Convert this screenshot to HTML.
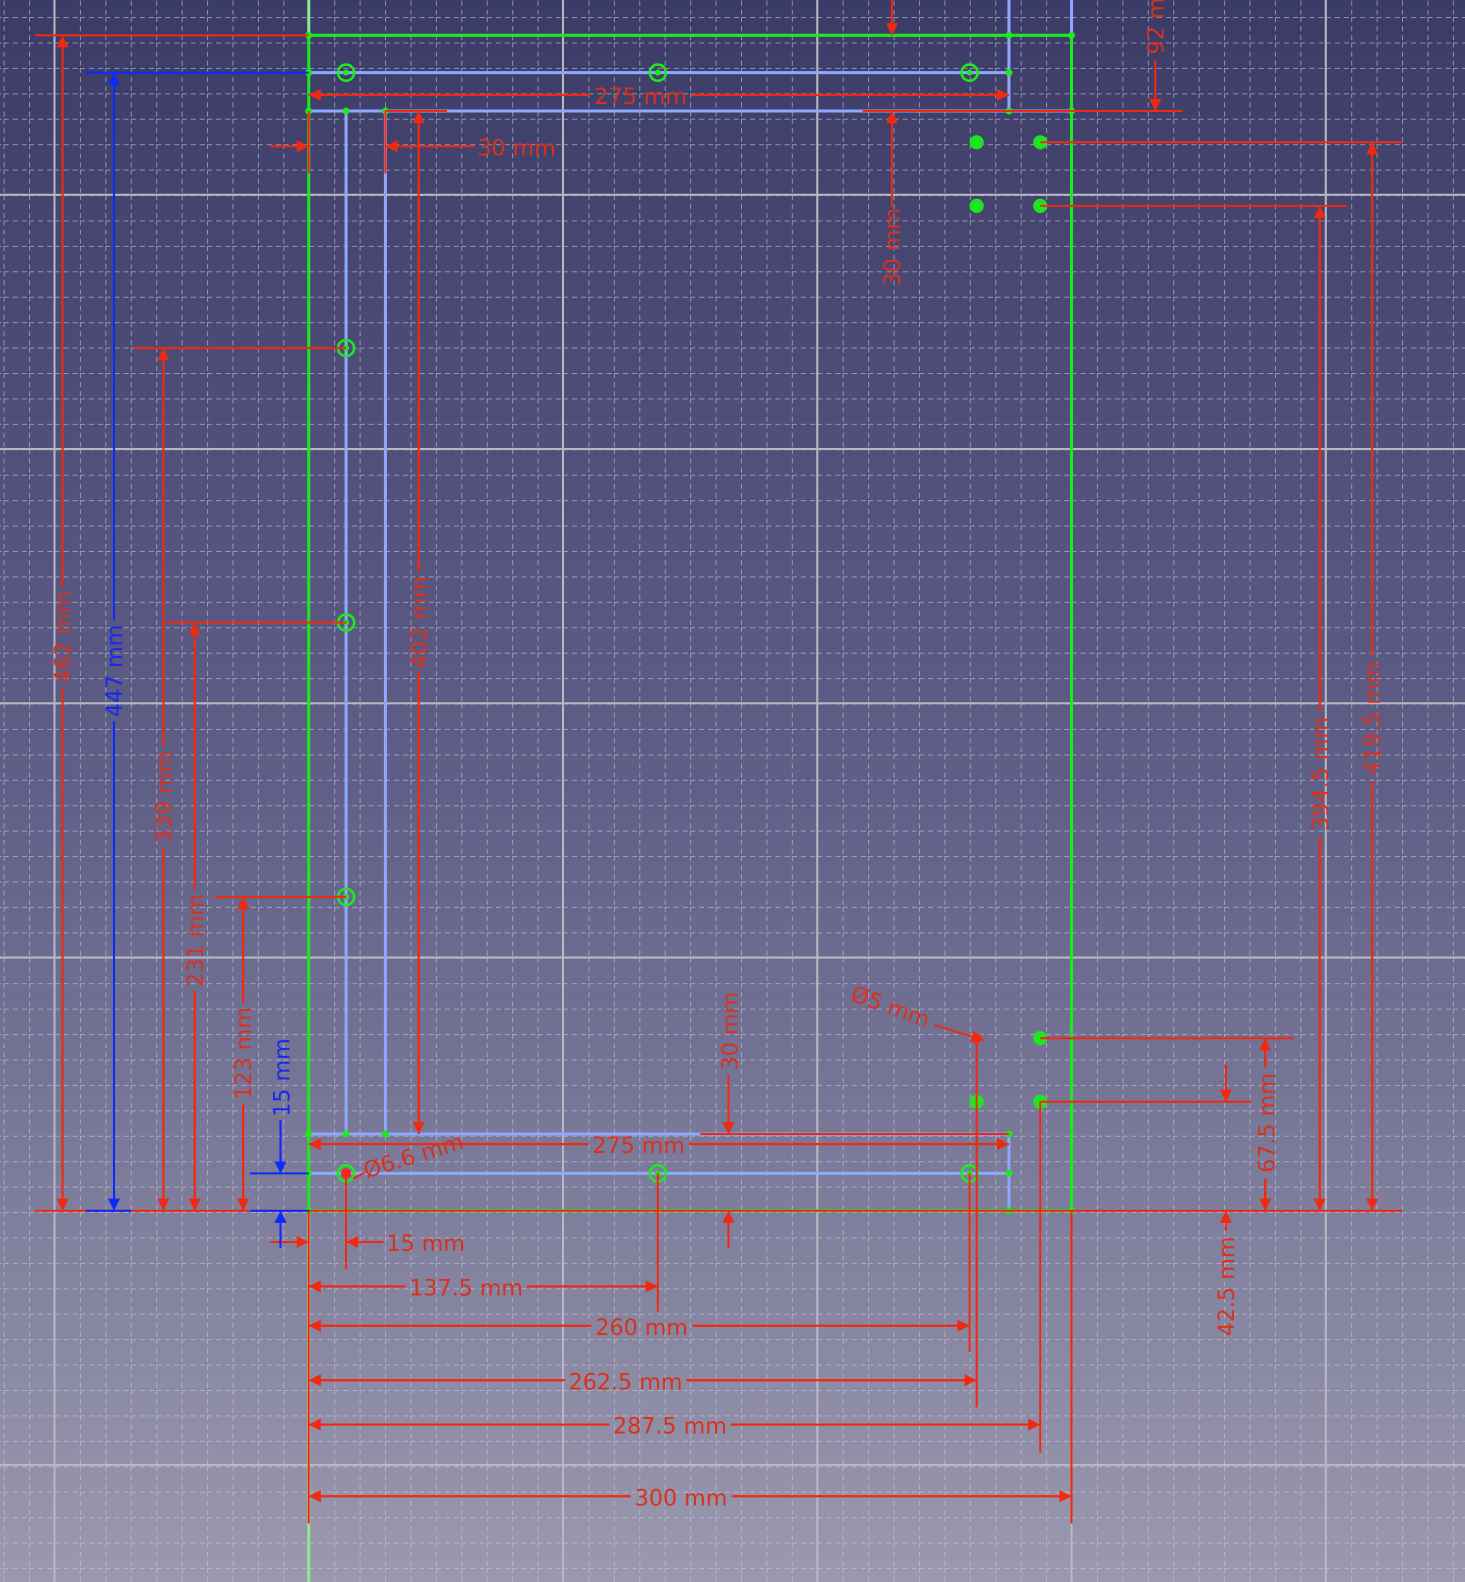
<!DOCTYPE html>
<html><head><meta charset="utf-8">
<style>
html,body{margin:0;padding:0;width:1465px;height:1582px;overflow:hidden;background:#5a5a80}
svg{display:block}
text{font-family:"DejaVu Sans","Liberation Sans",sans-serif;font-size:22px;fill:#d8321c}
</style></head><body>
<svg width="1465" height="1582" viewBox="0 0 1452 1568" preserveAspectRatio="none" xmlns="http://www.w3.org/2000/svg">
<defs>
<linearGradient id="bg" x1="0" y1="0" x2="0" y2="1">
<stop offset="0" stop-color="#3b3b67"/><stop offset="0.5" stop-color="#5f5f88"/><stop offset="1" stop-color="#9b99ae"/>
</linearGradient>
<pattern id="minor" x="3.6" y="16.9" width="25.2" height="25.2" patternUnits="userSpaceOnUse">
<path d="M0.5 0V25.2M0 0.5H25.2" stroke="#c8c8d8" stroke-width="1" stroke-dasharray="5 4" fill="none" opacity="0.6"/>
</pattern>
<marker id="a" viewBox="0 0 10 10" refX="10" refY="5" markerWidth="12" markerHeight="12" markerUnits="userSpaceOnUse" orient="auto">
<path d="M0 0L10 5L0 10z" fill="#f02a10"/></marker>
<marker id="b" viewBox="0 0 10 10" refX="10" refY="5" markerWidth="12" markerHeight="12" markerUnits="userSpaceOnUse" orient="auto">
<path d="M0 0L10 5L0 10z" fill="#0a2aff"/></marker>
<mask id="gap" maskUnits="userSpaceOnUse" x="0" y="0" width="1452" height="1568">
<rect width="1452" height="1568" fill="#fff"/>
<g fill="#000">
<rect x="585" y="82" width="100" height="26"/>
<rect x="472" y="133" width="80" height="26"/>
<rect x="583" y="1122" width="100" height="26"/>
<rect x="382" y="1219" width="80" height="26"/>
<rect x="402" y="1263" width="120" height="26"/>
<rect x="586" y="1302" width="100" height="26"/>
<rect x="560" y="1356" width="120" height="26"/>
<rect x="604" y="1400" width="120" height="26"/>
<rect x="625" y="1471" width="100" height="26"/>
<rect x="50" y="582" width="24" height="100"/>
<rect x="101" y="615" width="24" height="100"/>
<rect x="150" y="740" width="24" height="100"/>
<rect x="181" y="882" width="24" height="100"/>
<rect x="229" y="994" width="24" height="100"/>
<rect x="266" y="1028" width="24" height="80"/>
<rect x="403" y="567" width="24" height="100"/>
<rect x="872" y="205" width="24" height="80"/>
<rect x="1133" y="-30" width="24" height="90"/>
<rect x="1296" y="705" width="24" height="124"/>
<rect x="1348" y="650" width="24" height="124"/>
<rect x="1242" y="1058" width="24" height="110"/>
<rect x="1203" y="1220" width="24" height="110"/>
<rect x="710" y="982" width="24" height="80"/>
</g>
</mask>
</defs>
<rect width="1452" height="1568" fill="url(#bg)"/>
<rect width="1452" height="1568" fill="url(#minor)"/>
<g stroke="#b8b8c4" stroke-width="2">
<path d="M54 0V1568M306 0V1568M558 0V1568M810 0V1568M1062 0V1568M1314 0V1568"/>
<path d="M0 193H1452M0 445H1452M0 697H1452M0 949H1452M0 1452H1452"/>
</g>
<g stroke="#8ea8ff" stroke-width="3" fill="none">
<path d="M306 72H1000M306 110H1062M1000 0V110M1062 0V35"/>
<path d="M343 110V1124M382 110V1124M306 1124H1000M306 1163H1000M1000 1124V1200"/>
</g>
<g stroke="#1ee81e" stroke-width="3" fill="none">
<path d="M306 35H1062V1200H306Z"/>
</g>
<path d="M306 0V35" stroke="#90e890" stroke-width="3"/>
<path d="M306 1200V1568" stroke="#90e890" stroke-width="3"/>
<g stroke="#1ee81e" stroke-width="2.5" fill="none">
<circle cx="343" cy="72" r="8"/><circle cx="652" cy="72" r="8"/><circle cx="961" cy="72" r="8"/>
<circle cx="343" cy="345" r="8"/><circle cx="343" cy="617" r="8"/><circle cx="343" cy="889" r="8"/>
<circle cx="343" cy="1163" r="8"/><circle cx="652" cy="1163" r="8"/><circle cx="961" cy="1163" r="8"/>
</g>
<g fill="#1ee81e">
<circle cx="343" cy="72" r="3"/><circle cx="652" cy="72" r="3"/><circle cx="961" cy="72" r="3"/>
<circle cx="343" cy="345" r="3"/><circle cx="343" cy="617" r="3"/><circle cx="343" cy="889" r="3"/>
<circle cx="652" cy="1163" r="3"/><circle cx="961" cy="1163" r="3"/>
<circle cx="968" cy="141" r="5"/><circle cx="1031" cy="141" r="5"/><circle cx="968" cy="204" r="5"/><circle cx="1031" cy="204" r="5"/>
<circle cx="968" cy="1029" r="5"/><circle cx="1031" cy="1029" r="5"/><circle cx="968" cy="1092" r="5"/><circle cx="1031" cy="1092" r="5"/>
<circle cx="306" cy="35" r="3.5"/><circle cx="306" cy="72" r="3.5"/><circle cx="306" cy="110" r="3.5"/><circle cx="343" cy="110" r="3.5"/><circle cx="382" cy="110" r="3.5"/>
<circle cx="1000" cy="35" r="3.5"/><circle cx="1000" cy="72" r="3.5"/><circle cx="1000" cy="110" r="3.5"/><circle cx="1062" cy="35" r="3.5"/><circle cx="1062" cy="110" r="3.5"/>
<circle cx="306" cy="1124" r="3.5"/><circle cx="343" cy="1124" r="3.5"/><circle cx="382" cy="1124" r="3.5"/><circle cx="306" cy="1163" r="3.5"/><circle cx="306" cy="1200" r="3.5"/>
<circle cx="1000" cy="1124" r="3.5"/><circle cx="1000" cy="1163" r="3.5"/><circle cx="1000" cy="1200" r="3.5"/><circle cx="1062" cy="1200" r="3.5"/>
</g>
<g stroke="#1ee81e" stroke-width="2" fill="none">
<circle cx="968" cy="141" r="6"/><circle cx="1031" cy="141" r="6"/><circle cx="968" cy="204" r="6"/><circle cx="1031" cy="204" r="6"/>
<circle cx="968" cy="1092" r="6"/><circle cx="1031" cy="1092" r="6"/><circle cx="1031" cy="1029" r="6"/>
</g>
<circle cx="343" cy="1163" r="5" fill="#f02a10"/>
<circle cx="968" cy="1029" r="5" fill="#f02a10"/>
<g mask="url(#gap)">
<g stroke="#f02a10" stroke-width="2" fill="none">
<path d="M35 35H306M35 1200H1390M306 1200V1510"/>
<path d="M62 1200V35" marker-end="url(#a)"/><path d="M62 35V1200" marker-end="url(#a)"/>
<path d="M133 345H343"/><path d="M162 1200V345" marker-end="url(#a)"/><path d="M162 345V1200" marker-end="url(#a)"/>
<path d="M165 617H343"/><path d="M193 1200V617" marker-end="url(#a)"/><path d="M193 617V1200" marker-end="url(#a)"/>
<path d="M213 889H343"/><path d="M241 1200V889" marker-end="url(#a)"/><path d="M241 889V1200" marker-end="url(#a)"/>
<path d="M382 110H443M382 110V172M306 110V172"/>
<path d="M415 1124V110" marker-end="url(#a)"/><path d="M415 110V1124" marker-end="url(#a)"/>
<path d="M1000 94H306" marker-end="url(#a)"/><path d="M306 94H1000" marker-end="url(#a)"/>
<path d="M268 145H306" marker-end="url(#a)"/><path d="M470 145H382" marker-end="url(#a)"/>
<path d="M884 0V35" marker-end="url(#a)"/><path d="M884 280V110" marker-end="url(#a)"/><path d="M855 110H1000"/>
<path d="M1000 110H1172"/><path d="M1145 0V110" marker-end="url(#a)"/>
<path d="M1031 204H1335"/><path d="M1308 1200V204" marker-end="url(#a)"/><path d="M1308 204V1200" marker-end="url(#a)"/>
<path d="M1031 141H1390"/><path d="M1360 1200V141" marker-end="url(#a)"/><path d="M1360 141V1200" marker-end="url(#a)"/>
<path d="M1031 1029H1282"/><path d="M1254 1200V1029" marker-end="url(#a)"/><path d="M1254 1029V1200" marker-end="url(#a)"/>
<path d="M1031 1092H1240"/><path d="M1215 1055V1092" marker-end="url(#a)"/><path d="M1215 1240V1200" marker-end="url(#a)"/>
<path d="M722 1065V1124" marker-end="url(#a)"/><path d="M722 1237V1200" marker-end="url(#a)"/><path d="M694 1124H1000"/>
<path d="M1000 1134H306" marker-end="url(#a)"/><path d="M306 1134H1000" marker-end="url(#a)"/>
<path d="M268 1231H306" marker-end="url(#a)"/><path d="M380 1231H343" marker-end="url(#a)"/><path d="M343 1163V1258"/>
<path d="M652 1163V1300"/><path d="M652 1275H306" marker-end="url(#a)"/><path d="M306 1275H652" marker-end="url(#a)"/>
<path d="M961 1163V1340"/><path d="M961 1314H306" marker-end="url(#a)"/><path d="M306 1314H961" marker-end="url(#a)"/>
<path d="M968 1029V1395"/><path d="M968 1368H306" marker-end="url(#a)"/><path d="M306 1368H968" marker-end="url(#a)"/>
<path d="M1031 1092V1440"/><path d="M1031 1412H306" marker-end="url(#a)"/><path d="M306 1412H1031" marker-end="url(#a)"/>
<path d="M1062 1200V1510"/><path d="M1062 1483H306" marker-end="url(#a)"/><path d="M306 1483H1062" marker-end="url(#a)"/>
<path d="M926 1016L975 1031" marker-end="url(#a)"/>
<path d="M350 1168L362 1162"/>
</g>
<g stroke="#0a2aff" stroke-width="2" fill="none">
<path d="M85 72H306M85 1200H130"/>
<path d="M113 1200V72" marker-end="url(#b)"/><path d="M113 72V1200" marker-end="url(#b)"/>
<path d="M248 1163H306M248 1200H306"/>
<path d="M278 1110V1163" marker-end="url(#b)"/><path d="M278 1237V1200" marker-end="url(#b)"/>
</g>
</g>
<g>
<text transform="translate(70,632) rotate(-90)" text-anchor="middle">462 mm</text>
<text transform="translate(121,665) rotate(-90)" text-anchor="middle" style="fill:#1a2ae8">447 mm</text>
<text transform="translate(170,790) rotate(-90)" text-anchor="middle">339 mm</text>
<text transform="translate(201,932) rotate(-90)" text-anchor="middle">231 mm</text>
<text transform="translate(249,1044) rotate(-90)" text-anchor="middle">123 mm</text>
<text transform="translate(287,1068) rotate(-90)" text-anchor="middle" style="fill:#1a2ae8">15 mm</text>
<text transform="translate(423,617) rotate(-90)" text-anchor="middle">402 mm</text>
<text transform="translate(892,245) rotate(-90)" text-anchor="middle">30 mm</text>
<text transform="translate(1153,15) rotate(-90)" text-anchor="middle">92 mm</text>
<text transform="translate(1316,767) rotate(-90)" text-anchor="middle">394.5 mm</text>
<text transform="translate(1368,712) rotate(-90)" text-anchor="middle">419.5 mm</text>
<text transform="translate(1263,1113) rotate(-90)" text-anchor="middle">67.5 mm</text>
<text transform="translate(1223,1275) rotate(-90)" text-anchor="middle">42.5 mm</text>
<text transform="translate(731,1022) rotate(-90)" text-anchor="middle">30 mm</text>
<text x="635" y="103" text-anchor="middle">275 mm</text>
<text x="512" y="154" text-anchor="middle">30 mm</text>
<text x="633" y="1143" text-anchor="middle">275 mm</text>
<text x="422" y="1240" text-anchor="middle">15 mm</text>
<text x="462" y="1284" text-anchor="middle">137.5 mm</text>
<text x="636" y="1323" text-anchor="middle">260 mm</text>
<text x="620" y="1377" text-anchor="middle">262.5 mm</text>
<text x="664" y="1421" text-anchor="middle">287.5 mm</text>
<text x="675" y="1492" text-anchor="middle">300 mm</text>
<text transform="translate(412,1153) rotate(-17)" text-anchor="middle">Ø6.6 mm</text>
<text transform="translate(880,1005) rotate(20)" text-anchor="middle">Ø5 mm</text>
</g>
</svg>
</body></html>
